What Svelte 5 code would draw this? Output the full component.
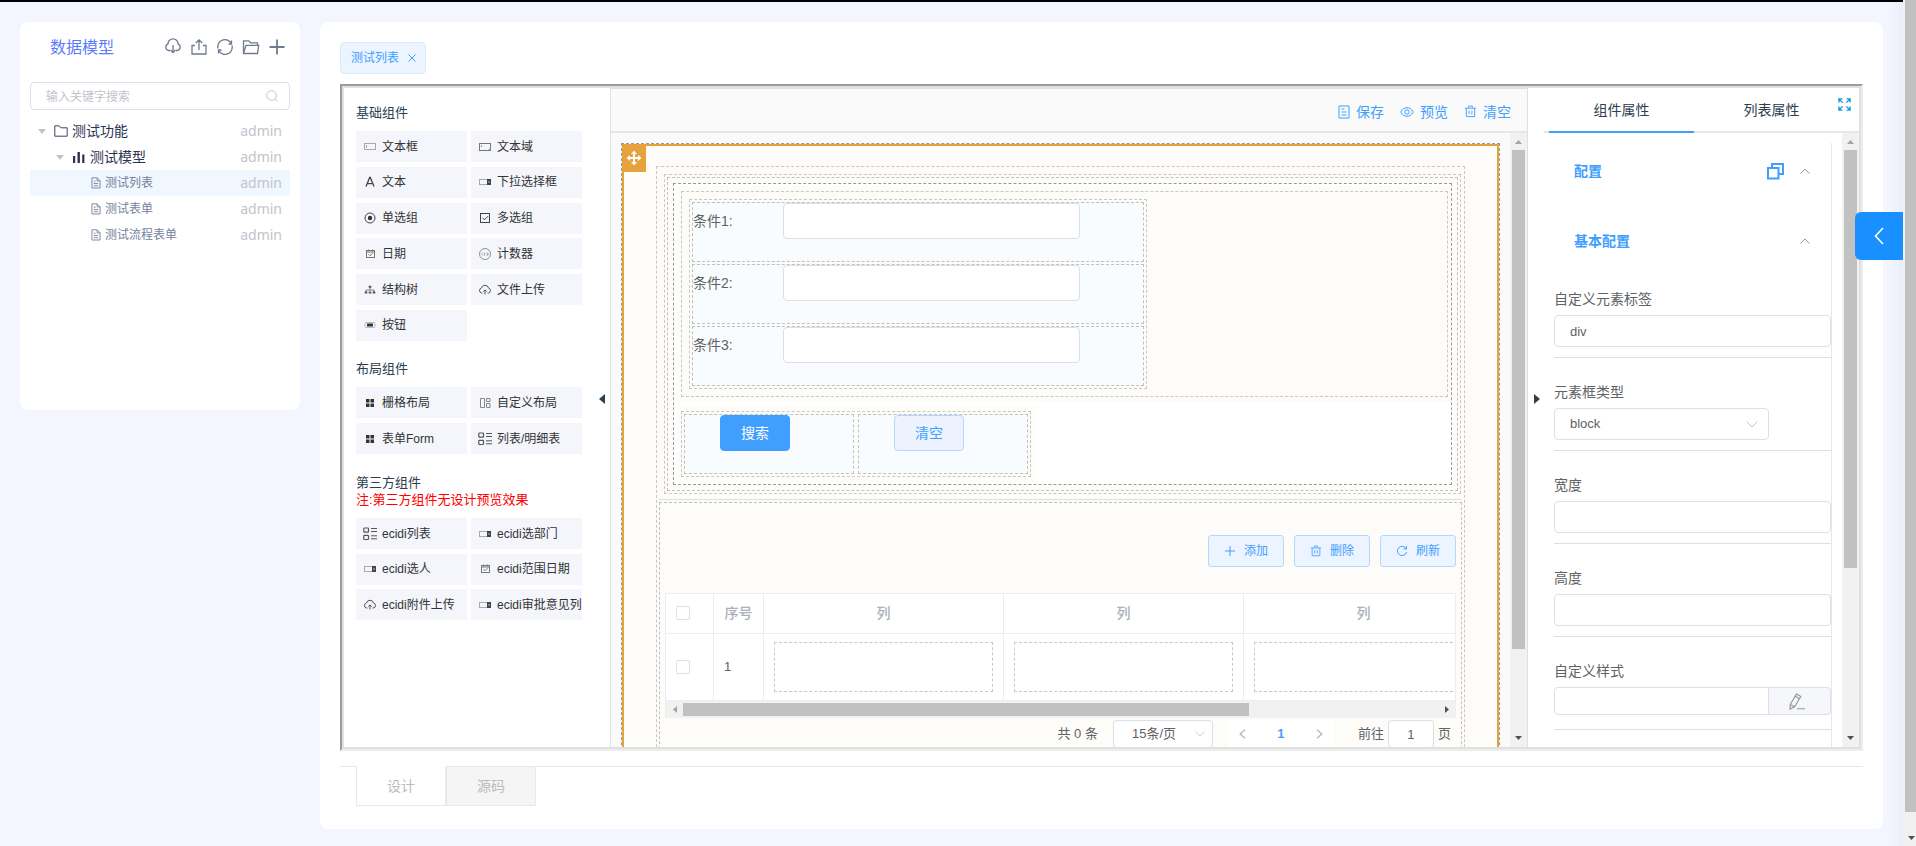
<script>
  const glyphs = {
    input: '<rect x="1.5" y="3.5" width="11" height="6" stroke="#aaa"/><path d="M3.5 5v3" stroke="#aaa"/>',
    textarea: '<rect x="1.5" y="3.5" width="11" height="7" stroke="#777"/><path d="M3.5 5v2M10 10.5l2.5-2.5" stroke="#999"/>',
    letter: '<path d="M3 11.500 6.700 2.500h.6L11 11.500M4.200 8.700h5.600" stroke="#444" stroke-width="1.300"/>',
    select: '<rect x="1.5" y="4.5" width="11" height="5" stroke="#aaa"/><path d="M9 4h4v6H9z" fill="#444"/><path d="M10.200 6.500h1.600L11 8z" fill="#fff"/>',
    radio: '<circle cx="7" cy="7" r="5" stroke="#444"/><circle cx="7" cy="7" r="2.200" fill="#333"/>',
    check: '<rect x="2.500" y="2.500" width="9" height="9" stroke="#444"/><path d="m4.500 6.800 2 2 3.500-3.600" stroke="#444"/>',
    date: '<rect x="3.500" y="3.500" width="8" height="7" stroke="#777"/><path d="M3.500 5h8M5.500 2.500v2M9.500 2.500v2M5.500 7.200l1.500 1.500 2.500-2.500" stroke="#777"/>',
    counter: '<circle cx="7" cy="7" r="5.500" stroke="#777" stroke-width=".8"/><path d="M4 5.800v2.600M5.600 6h1.400v1L5.800 8.200H7.200M8.600 6h1.500v2.200H8.600M8.900 7h1.200" stroke="#888" stroke-width=".6"/>',
    tree: '<path d="M7 4v3M3 9V7h8v2" stroke="#666" stroke-width=".8"/><path d="M5.700 2.800h2.600v2H5.700zM1.700 8.500h2.600v2H1.700zM5.700 8.500h2.600v2H5.700zM9.700 8.500h2.600v2H9.700z" fill="#555"/>',
    upload: '<path d="M4.500 10H3.600a2.500 2.500 0 0 1-.2-4.900 3.700 3.700 0 0 1 7.200 0 2.500 2.500 0 0 1-.2 4.900h-.9M7 11.500V7M5.300 8.500 7 6.900l1.700 1.600" stroke="#555"/>',
    button: '<rect x="2" y="4.500" width="10" height="5" rx="1" stroke="#bbb"/><path d="M4 5.500h6v3H4z" fill="#333"/>',
    grid: '<path d="M3 3h3.500v3.500H3zM7.500 3H11v3.500H7.500zM3 7.500h3.500V11H3zM7.500 7.500H11V11H7.500z" fill="#333"/>',
    custom: '<path d="M2.500 2.500h4v9h-4zM8.500 2.500h3.500v3H8.500zM8.500 7.500h3.500v4H8.500z" stroke="#888"/>',
    list: '<rect x=".8" y="1" width="4.700" height="4.200" rx=".8" stroke="#555" stroke-width="1.200"/><rect x=".8" y="8.300" width="4.700" height="4.200" rx=".8" stroke="#555" stroke-width="1.200"/><path d="M8 1.500h6M8 4.500h6M8 8.800h6M8 11.800h6" stroke="#555"/>'
  };

  const sections = [
    { title: '基础组件', height: 210, items: [
      ['input', '文本框'], ['textarea', '文本域'], ['letter', '文本'], ['select', '下拉选择框'],
      ['radio', '单选组'], ['check', '多选组'], ['date', '日期'], ['counter', '计数器'],
      ['tree', '结构树'], ['upload', '文件上传'], ['button', '按钮']
    ] },
    { title: '布局组件', height: 67, items: [
      ['grid', '栅格布局'], ['custom', '自定义布局'], ['grid', '表单Form'], ['list', '列表/明细表']
    ] },
    { title: '第三方组件', note: '注:第三方组件无设计预览效果', height: 102, items: [
      ['list', 'ecidi列表'], ['select', 'ecidi选部门'], ['select', 'ecidi选人'],
      ['date', 'ecidi范围日期'], ['upload', 'ecidi附件上传'], ['select', 'ecidi审批意见列']
    ] }
  ];

  const leaves = ['测试列表', '测试表单', '测试流程表单'];
  const conditions = ['条件1:', '条件2:', '条件3:'];
</script>

{#snippet vbar(size)}
  <div class="vbar" aria-hidden="true">
    <svg width="17" height="17" viewBox="0 0 17 17"><path d="M5 11h7L8.500 7z" fill="#a3a3a3" /></svg>
    <div class="vtrack"><div class="vthumb" style="height:{size}%"></div></div>
    <svg width="17" height="17" viewBox="0 0 17 17"><path d="M5 6h7l-3.500 4z" fill="#505050" /></svg>
  </div>
{/snippet}

{#snippet trash(size)}
  <svg width={size} height={size} viewBox="0 0 14 14" fill="none" stroke="currentColor"><path d="M1 3.500h12M2.500 3.500v9h9v-9M5 3V1.200h4V3M5.500 6v4M8.500 6v4" /></svg>
{/snippet}

{#snippet doc()}
  <svg class="doc" width="10" height="12" viewBox="0 0 11 13" fill="none" stroke="currentColor"><path d="M1 .8h5.800L10 4v8H1zM6.700 1v3.200H10M3 4.500h2M3 7h5M3 9.500h5" /></svg>
{/snippet}

<div class="page">
  <div class="content">
    <aside>
      <header class="side-head">
        <h1>数据模型</h1>
        <div class="tools">
          <button aria-label="下载"><svg width="18" height="18" viewBox="0 0 18 18"><path d="M6 12.500H4.800A3.500 3.500 0 0 1 4 5.800a5 5 0 0 1 10 0 3.500 3.500 0 0 1-.8 6.700H12M9 7v7.500M6.500 12 9 14.500l2.500-2.500" /></svg></button>
          <button aria-label="上传"><svg width="18" height="18" viewBox="0 0 18 18"><path d="M5 7.500H2V16h14V7.500h-3M9 12V2M5.800 5 9 1.800 12.200 5" /></svg></button>
          <button aria-label="刷新模型"><svg width="18" height="18" viewBox="0 0 18 18"><path d="M1.800 10.500V8.300A7.200 7.200 0 0 1 15 5M16.200 7.500v2.200A7.200 7.200 0 0 1 3 13M15.500 2.500V6h-3M2.500 15.500V12h3" /></svg></button>
          <button aria-label="文件夹"><svg width="18" height="18" viewBox="0 0 18 18"><path d="M1.500 15.500V2.800h5.200l1.800 2h7v2.500M1.500 15.500 4 7.300h12.700l-1.200 8.200z" /></svg></button>
          <button aria-label="新增"><svg width="18" height="18" viewBox="0 0 18 18"><path d="M9 1.500v15M1.500 9h15" stroke-width="1.800" /></svg></button>
        </div>
      </header>
      <div class="search">
        <input type="text" placeholder="输入关键字搜索" aria-label="输入关键字搜索" />
        <svg width="12" height="12" viewBox="0 0 12 12" fill="none" stroke="#c0c4cc"><circle cx="5.500" cy="5.500" r="4.800" /><path d="m9 9 2.500 2.500" /></svg>
      </div>
      <ul class="tree">
        <li class="l1">
          <i class="caret"></i>
          <svg width="14" height="12" viewBox="0 0 14 12" fill="none" stroke="#3d4663"><path d="M.8 11.200V.8h4.400l1.600 2h6.400v8.400z" /></svg>
          <span>测试功能</span><em>admin</em>
        </li>
        <li class="l2">
          <i class="caret"></i>
          <svg width="14" height="12" viewBox="0 0 14 12"><path d="M1 5h2.200v7H1zM5.500 1h2.400v11H5.500zM10.200 3.500h2.200V12h-2.200z" fill="#2b3350" /></svg>
          <span>测试模型</span><em>admin</em>
        </li>
        {#each leaves as leaf, i}
          <li class="l3" class:active={i === 0}>{@render doc()}<span>{leaf}</span><em>admin</em></li>
        {/each}
      </ul>
    </aside>

    <main>
      <div class="tag">测试列表
        <button aria-label="关闭"><svg width="8" height="8" viewBox="0 0 8 8" fill="none" stroke="currentColor"><path d="m.5.5 7 7M7.500.5l-7 7" /></svg></button>
      </div>

      <div class="frame">
        <div class="designer">
          <div class="palette">
            {#each sections as s}
              <section>
                <h2>{s.title}</h2>
                {#if s.note}<p>{s.note}</p>{/if}
                <div class="items" style="min-height:{s.height}px">
                  {#each s.items as [icon, label]}
                    <div class="item"><svg width="14" height="14" viewBox="0 0 14 14" fill="none">{@html glyphs[icon]}</svg><span>{label}</span></div>
                  {/each}
                </div>
              </section>
            {/each}
            <i class="fold left"></i>
          </div>

          <div class="center">
            <div class="bar">
              <button><svg width="12" height="14" viewBox="0 0 12 14" fill="none" stroke="currentColor"><path d="M1 1h10v12H1zM3.500 4h3M3.500 7h5M3.500 10h5" /></svg>保存</button>
              <button><svg width="14" height="14" viewBox="0 0 14 14" fill="none" stroke="currentColor"><path d="M.7 7C2.500 4 4.600 2.700 7 2.700S11.500 4 13.300 7C11.500 10 9.400 11.300 7 11.300S2.500 10 .7 7z" /><circle cx="7" cy="7" r="2.200" /></svg>预览</button>
              <button>{@render trash(13)}清空</button>
            </div>
            <div class="stage">
              <div class="canvas">
                <div class="root">
                  <div class="selected">
                    <div class="handle"><svg width="16" height="16" viewBox="0 0 16 16" fill="#fff"><path d="M8 .5 11 4H9v3h3V5l3.500 3-3.500 3V9H9v3h2l-3 3.500L5 12h2V9H4v2L.5 8 4 5v2h3V4H5z" /></svg></div>
                    <div class="box-a">
                      <div class="box-b"><div class="box-c"><div class="box-d">
                        <div class="tint wide"><div class="dash">
                          <div class="tint cond"><div class="dash rows">
                            {#each conditions as c, i}
                              <div class="cell form-row"><label for="cond{i}">{c}</label><input id="cond{i}" type="text" /></div>
                            {/each}
                          </div></div>
                        </div></div>
                        <div class="tint acts"><div class="dash pair">
                          <div class="cell"><button class="btn primary">搜索</button></div>
                          <div class="cell"><button class="btn plain">清空</button></div>
                        </div></div>
                      </div></div></div>
                      <div class="rule"></div>
                      <div class="box-j">
                        <div class="ops">
                          <button><svg width="12" height="12" viewBox="0 0 12 12" fill="none" stroke="currentColor"><path d="M6 1v10M1 6h10" /></svg>添加</button>
                          <button>{@render trash(12)}删除</button>
                          <button><svg width="12" height="12" viewBox="0 0 12 12" fill="none" stroke="currentColor"><path d="M10.200 3.800A4.600 4.600 0 1 0 10.600 7M10.500 1v3H7.500" /></svg>刷新</button>
                        </div>
                        <div class="grid-wrap">
                          <div class="grid-clip">
                            <table>
                              <colgroup><col class="c1" /><col class="c2" /><col class="c3" /><col class="c3" /><col class="c3" /></colgroup>
                              <thead><tr><th><input type="checkbox" aria-label="全选" /></th><th class="no">序号</th><th>列</th><th>列</th><th>列</th></tr></thead>
                              <tbody><tr><td><input type="checkbox" aria-label="选择第1行" /></td><td>1</td><td><div class="slot"></div></td><td><div class="slot"></div></td><td><div class="slot"></div></td></tr></tbody>
                            </table>
                          </div>
                          <div class="hbar" aria-hidden="true">
                            <svg width="17" height="17" viewBox="0 0 17 17"><path d="M11 5v7L7 8.500z" fill="#a3a3a3" /></svg>
                            <div class="htrack"><div class="hthumb"></div></div>
                            <svg width="17" height="17" viewBox="0 0 17 17"><path d="M7 5v7l4-3.500z" fill="#505050" /></svg>
                          </div>
                        </div>
                        <div class="pager">
                          <span>共 0 条</span>
                          <div class="sel size">
                            <select aria-label="每页条数"><option>15条/页</option></select>
                            <svg width="10" height="6" viewBox="0 0 12 7" fill="none" stroke="#c0c4cc"><path d="m.5.5 5.500 5.500L11.500.5" /></svg>
                          </div>
                          <div class="pages">
                            <button aria-label="上一页"><svg width="7" height="10" viewBox="0 0 7 10" fill="none" stroke="#b4b9c2" stroke-width="1.400"><path d="M6 .7 1.200 5 6 9.300" /></svg></button>
                            <button class="cur">1</button>
                            <button aria-label="下一页"><svg width="7" height="10" viewBox="0 0 7 10" fill="none" stroke="#b4b9c2" stroke-width="1.400"><path d="M1 .7 5.800 5 1 9.300" /></svg></button>
                          </div>
                          <label for="jump">前往</label><input id="jump" type="text" value="1" /><span>页</span>
                        </div>
                      </div>
                    </div>
                  </div>
                </div>
              </div>
              {@render vbar(86)}
            </div>
          </div>

          <div class="props">
            <i class="fold right"></i>
            <div class="tabs">
              <button class="on">组件属性</button><button>列表属性</button>
              <svg class="full" width="13" height="13" viewBox="0 0 14 14" fill="none" stroke="#1296db" stroke-width="1.400"><path d="M1 4.800V1h3.800M9.200 1H13v3.800M13 9.200V13H9.200M4.800 13H1V9.200M1 1l4 4M13 1 9 5M13 13 9 9M1 13l4-4" /></svg>
            </div>
            <div class="props-body">
              <div class="form">
                <div class="fold-head">配置
                  <svg class="copy" width="17" height="17" viewBox="0 0 17 17" fill="none" stroke="#409eff" stroke-width="2"><path d="M5 5V1h11v10h-4M1 5h10.500v10.500H1z" /></svg>
                  <svg width="10" height="6" viewBox="0 0 10 6" fill="none" stroke="#999"><path d="M.5 5.500 5 1l4.500 4.500" /></svg>
                </div>
                <div class="fold-head">基本配置
                  <svg width="10" height="6" viewBox="0 0 10 6" fill="none" stroke="#999"><path d="M.5 5.500 5 1l4.500 4.500" /></svg>
                </div>
                <div class="field"><label for="p-tag">自定义元素标签</label><input id="p-tag" type="text" value="div" /></div>
                <div class="field"><label for="p-type">元素框类型</label>
                  <div class="sel type">
                    <select id="p-type"><option>block</option></select>
                    <svg width="12" height="7" viewBox="0 0 12 7" fill="none" stroke="#c0c4cc"><path d="m.5.5 5.500 5.500L11.500.5" /></svg>
                  </div>
                </div>
                <div class="field"><label for="p-w">宽度</label><input id="p-w" type="text" /></div>
                <div class="field"><label for="p-h">高度</label><input id="p-h" type="text" /></div>
                <div class="field"><label for="p-css">自定义样式</label>
                  <div class="group"><input id="p-css" type="text" />
                    <button aria-label="编辑样式"><svg width="16" height="17" viewBox="0 0 16 17" fill="none" stroke="#909399" stroke-width="1.100"><path d="m1 16 .3-4.500L7.500 1l4.300 2.500-6.200 10.300zM6.200 3.200l4.300 2.500M1.300 11.500l4.300 2.300M8 15.800h8" /></svg></button>
                  </div>
                </div>
              </div>
              {@render vbar(72)}
            </div>
          </div>
        </div>
      </div>

      <div class="modes"><button class="active">设计</button><button>源码</button></div>
    </main>

    <button class="drawer" aria-label="展开"><svg width="10" height="18" viewBox="0 0 10 18" fill="none" stroke="#fff" stroke-width="1.600"><path d="M9 1 1.500 9 9 17" /></svg></button>
  </div>
  <div class="page-bar" aria-hidden="true">
    <div class="page-thumb"></div>
    <svg width="11" height="17" viewBox="0 0 11 17"><path d="M3 7h7l-3.500 4z" fill="#505050" /></svg>
  </div>
</div>

<style>
  :global(body) { margin: 0; overflow: hidden; }
  .page, .page :global(*) { box-sizing: border-box; }
  .page {
    display: flex; height: 100vh; overflow: hidden;
    font-family: "Liberation Sans", "Noto Sans CJK SC", sans-serif;
    font-size: 14px; line-height: 20px; color: #606266;
  }
  svg { display: block; flex: none; }
  button { font: inherit; color: inherit; background: none; border: 0; padding: 0; margin: 0; cursor: pointer; }
  input, select { font: inherit; color: inherit; margin: 0; outline: 0; }
  h1, h2, p, ul { margin: 0; padding: 0; font-weight: 400; }

  .content {
    position: relative; flex: 1; min-width: 0; display: flex; align-items: flex-start; gap: 20px;
    padding: 20px 20px 17px; border-top: 2px solid #000;
    background: linear-gradient(270deg, #eaeefa 0, #f3f6ff 14px);
  }
  .page-bar { width: 13px; padding-left: 2px; background: #f1f1f1; display: flex; flex-direction: column; }
  .page-thumb { height: 96%; background: #c1c1c1; }
  .page-bar svg { margin-top: auto; }

  aside {
    width: 280px; min-height: 388px; flex: none; padding: 10px; background: #fff; border-radius: 8px;
    font-family: "Noto Sans", "Noto Sans CJK SC", sans-serif;
  }
  .side-head { display: flex; align-items: center; justify-content: space-between; height: 30px; padding: 0 4px 0 20px; }
  h1 { font-size: 16px; color: #5c7cfa; }
  .tools { display: flex; gap: 8px; }
  .tools svg { fill: none; stroke: #6f7a91; stroke-width: 1.3; }
  .search { position: relative; margin-top: 20px; }
  .search input { display: block; width: 100%; height: 28px; padding: 0 30px 0 15px; border: 1px solid #dcdfe6; border-radius: 4px; font-size: 12px; }
  .search input::placeholder { color: #c0c4cc; }
  .search svg { position: absolute; right: 12px; top: 8px; }
  .tree { list-style: none; margin-top: 8px; }
  .tree li { display: flex; align-items: center; height: 26px; padding-right: 8px; gap: 4px; color: #2b3350; }
  .l1 { padding-left: 8px; }
  .tree .l2 { padding-left: 26px; }
  .tree .l3 { padding-left: 61px; font-size: 12px; color: #76819a; }
  .tree .active { background: #f0f7ff; }
  .caret { border: 4px solid transparent; border-top: 5px solid #c0c4cc; border-bottom: 0; margin-right: 4px; }
  em { margin-left: auto; font-style: normal; font-size: 14px; color: #c0c4cc; }

  main { flex: 1; min-width: 0; align-self: stretch; display: flex; flex-direction: column; padding: 20px 20px 0; background: #fff; border-radius: 8px; }
  .tag { align-self: flex-start; display: flex; align-items: center; gap: 9px; height: 32px; padding: 0 9px 0 10px; border: 1px solid #d9ecff; border-radius: 4px; background: #ecf5ff; color: #409eff; font-size: 12px; }
  .frame { flex: 1; min-height: 0; margin-top: 10px; border: 2px solid; border-color: #9a9a9a #ededed #ededed #9a9a9a; }
  .designer { display: flex; height: 100%; border: 2px solid #e0e0e0; }

  .palette { position: relative; width: 267px; flex: none; padding: 15px 28px 0 12px; border-right: 1px solid #e0e0e0; overflow: hidden; }
  section { margin-bottom: 18px; }
  section h2 { font-size: 13px; line-height: 20px; color: #2c3e50; }
  section p { font-size: 13px; line-height: 14px; color: #f00; }
  .items { margin-top: 8px; display: grid; grid-template-columns: 1fr 1fr; grid-auto-rows: 31px; column-gap: 4px; align-content: space-between; }
  section:nth-child(3) { padding-top: 1px; }
  section:nth-child(3) .items { margin-top: 11px; }
  .item { display: flex; align-items: center; gap: 5px; padding-left: 7px; background: #f4f6fc; color: #333; font-size: 12px; white-space: nowrap; overflow: hidden; }
  .fold { position: absolute; top: calc(50% - 24px); border: 5px solid transparent; }
  .fold.left { right: 5px; border-left: 0; border-right: 6px solid #2c3e50; }
  .fold.right { left: 6px; border-right: 0; border-left: 6px solid #2c3e50; }

  .center { flex: 1; min-width: 0; display: flex; flex-direction: column; background: #fafafa; }
  .bar { flex: none; display: flex; justify-content: flex-end; align-items: center; gap: 16px; height: 45px; padding: 3px 16px 0; border-top: 1px solid #e0e0e0; border-bottom: 2px solid #e4e7ed; color: #409eff; }
  .bar button { display: flex; align-items: center; gap: 6px; }
  .stage { flex: 1; min-height: 0; display: flex; }
  .canvas { flex: 1; min-width: 0; padding: 10px 10px 0; overflow: hidden; }
  .root { border: 1px dashed #999; }
  .selected { position: relative; padding: 20px 32px 20px; border: 2px solid #e6a23c; background: #fefcf8; }
  .handle { position: absolute; left: -2px; top: -2px; width: 24px; height: 28px; display: grid; place-items: center; background: #e6a23c; }
  .box-a { padding: 2px; border: 1px dashed #c8c8c8; }
  .box-b { margin: 5px 1px 5px 5px; padding: 2px; border: 1px dashed #c8c8c8; }
  .box-c { padding: 5px; border: 1px dashed #c0c0c0; }
  .box-d { border: 1px dashed #999; background: #fff; padding: 2px 0 2px 2px; }
  .tint { padding: 5px; background: #fefcf8; }
  .dash { border: 1px dashed #c8c8c8; }
  .wide { padding-right: 3px; }
  .cond { margin: 2px; width: 468px; }
  .rows { display: grid; gap: 2px; padding: 2px; }
  .cell { height: 60px; border: 1px dashed #c0c0c0; background: #f8fcff; }
  .form-row { display: flex; align-items: flex-start; }
  .form-row label { width: 90px; line-height: 36px; }
  .form-row input { width: 297px; height: 36px; padding: 0 15px; border: 1px solid #dcdfe6; border-radius: 4px; background: #fff; }
  .acts { width: 360px; margin-top: 4px; }
  .pair { display: grid; grid-template-columns: 170px 170px; gap: 4px; padding: 2px; }
  .pair .cell { padding-left: 35px; }
  .btn { height: 36px; padding: 0 20px; border: 1px solid #409eff; border-radius: 4px; }
  .primary { background: #409eff; color: #fff; }
  .plain { background: #ecf3fe; border-color: #b3d8ff; color: #409eff; }
  .rule { height: 1px; margin-bottom: 2px; background: #dcdfe6; }
  .box-j { padding: 32px 5px 40px; border: 1px dashed #c0c0c0; }
  .ops { display: flex; justify-content: flex-end; gap: 10px; }
  .ops button { display: flex; align-items: center; gap: 8px; height: 32px; padding: 0 15px; border: 1px solid #b3d8ff; border-radius: 3px; background: #ecf5ff; color: #409eff; font-size: 12px; }

  .grid-wrap { margin-top: 26px; border: 1px solid #ebeef5; border-bottom: 0; }
  .grid-clip { overflow: hidden; background: #fff; }
  table { width: 818px; table-layout: fixed; border-collapse: separate; border-spacing: 0; }
  .c1 { width: 48px; }
  .c2 { width: 50px; }
  .c3 { width: 240px; }
  th, td { padding: 0 10px; border-right: 1px solid #ebeef5; border-bottom: 1px solid #ebeef5; text-align: left; }
  th { height: 40px; padding-bottom: 2px; text-align: center; color: #a9b0bb; font-weight: 500; }
  th:first-child { text-align: left; }
  .no { white-space: nowrap; }
  td { height: 67px; font-size: 13px; }
  input[type="checkbox"] { appearance: none; display: block; width: 14px; height: 14px; border: 1px solid #dcdfe6; border-radius: 2px; background: #fff; }
  .slot { height: 50px; border: 1px dashed #c8c8c8; }
  .hbar { display: flex; height: 17px; background: #f1f1f1; }
  .htrack { flex: 1; padding: 2px 0; }
  .hthumb { width: 75%; height: 13px; background: #c1c1c1; }

  .pager { display: flex; align-items: center; margin-top: 2px; padding-right: 5px; height: 28px; justify-content: flex-end; font-size: 13px; }
  .sel { position: relative; }
  .sel select { appearance: none; display: block; width: 100%; height: 100%; border: 1px solid #dcdfe6; border-radius: 4px; background: #fff; }
  .sel svg { position: absolute; top: calc(50% - 3px); pointer-events: none; }
  .size { width: 100px; height: 28px; margin: 0 15px; }
  .size select { padding: 0 18px; }
  .size svg { right: 8px; }
  .pages { display: flex; justify-content: space-between; width: 106px; height: 28px; margin-right: 24px; padding: 0 11px; background: #fff; }
  .cur { color: #409eff; font-weight: 700; }
  .pager > input { width: 46px; height: 28px; margin: 0 4px; padding: 0; text-align: center; border: 1px solid #dcdfe6; border-radius: 4px; background: #fff; }

  .vbar { flex: none; display: flex; flex-direction: column; width: 17px; background: #f1f1f1; }
  .vtrack { flex: 1; padding: 0 2px; }
  .vthumb { background: #c1c1c1; }

  .props { position: relative; width: 332px; flex: none; display: flex; flex-direction: column; border-left: 1px solid #e0e0e0; }
  .tabs { position: relative; flex: none; display: flex; height: 45px; margin-left: 16px; padding-left: 5px; gap: 5px; border-bottom: 2px solid #e4e7ed; color: #2c3e50; }
  .tabs button { width: 145px; height: 45px; border-bottom: 2px solid transparent; }
  .tabs .on { border-color: #409eff; }
  .full { position: absolute; right: 8px; top: 10px; }
  .props-body { flex: 1; min-height: 0; display: flex; }
  .form { flex: 1; min-width: 0; margin: 10px 10px 0 26px; border-right: 1px solid #e4e7ed; overflow: hidden; }
  .fold-head { display: flex; align-items: center; height: 58px; margin-bottom: 12px; padding: 0 21px 2px 20px; font-weight: 700; color: #409eff; }
  .fold-head svg:last-child { margin-left: auto; }
  .fold-head .copy { margin-left: auto; }
  .fold-head .copy + svg { margin-left: 16px; }
  .field { height: 93px; padding-top: 24px; border-bottom: 1px solid #dcdfe6; }
  .field:nth-child(3) { height: 75px; padding-top: 6px; }
  .field label { display: block; line-height: 20px; margin-bottom: 6px; }
  .field input, .type { height: 32px; font-size: 13px; }
  .field input { display: block; width: 100%; padding: 0 15px; border: 1px solid #dcdfe6; border-radius: 4px; background: #fff; }
  .type { width: 215px; }
  .type select { padding: 0 15px; }
  .type svg { right: 11px; }
  .group { display: flex; }
  .group input { flex: 1; min-width: 0; height: 28px; border-radius: 4px 0 0 4px; }
  .group button { width: 62px; height: 28px; display: grid; place-items: center; padding-right: 5px; border: 1px solid #dcdfe6; border-left: 0; border-radius: 0 4px 4px 0; background: #f5f7fa; }

  .modes { display: flex; flex: none; height: 63px; margin-top: 15px; padding-left: 16px; border-top: 1px solid #e8e8e8; }
  .modes button { width: 90px; height: 40px; margin-top: -1px; border: 1px solid #e8e8e8; background: #f5f5f5; color: #bbb; }
  .modes .active { background: #fff; border-top-color: #fff; }

  .drawer { position: absolute; right: 0; top: 210px; width: 48px; height: 48px; display: grid; place-items: center; border-radius: 6px 0 0 6px; background: #1890ff; }
</style>
